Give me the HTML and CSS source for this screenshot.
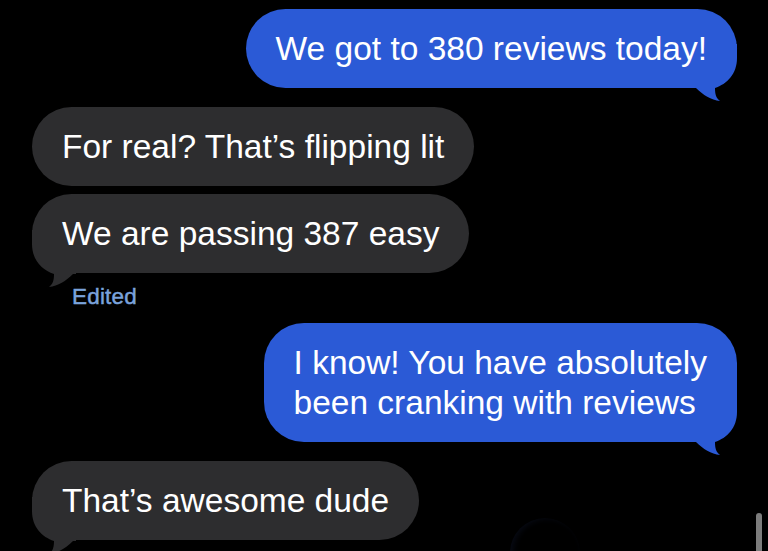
FILE: index.html
```html
<!DOCTYPE html>
<html lang="en">
<head>
<meta charset="utf-8">
<title>Messages</title>
<link rel="stylesheet" href="styles.css">
</head>
<body>
<main class="thread">
  <div class="msg sent first">
    <span class="text">We got to 380 reviews today!</span>
    <svg class="tail tail-sent" viewBox="0 0 44 60" width="44" height="60" aria-hidden="true"><path d="M0,0 H44 V14 C44,30 34,40 22,44 C22,50 23,54 27,57 C18,56 10,51 3,44 H0 Z"/></svg>
  </div>
  <div class="msg recv gap-l">
    <span class="text">For real? That’s flipping lit</span>
  </div>
  <div class="msg recv gap-s">
    <span class="text">We are passing 387 easy</span>
    <svg class="tail tail-recv" viewBox="0 0 44 60" width="44" height="60" aria-hidden="true"><path d="M0,0 H44 V14 C44,30 34,40 22,44 C22,50 23,54 27,57 C18,56 10,51 3,44 H0 Z"/></svg>
  </div>
  <div class="edited">Edited</div>
  <div class="msg sent after-edited">
    <span class="text">I know! You have absolutely<br>been cranking with reviews</span>
    <svg class="tail tail-sent" viewBox="0 0 44 60" width="44" height="60" aria-hidden="true"><path d="M0,0 H44 V14 C44,30 34,40 22,44 C22,50 23,54 27,57 C18,56 10,51 3,44 H0 Z"/></svg>
  </div>
  <div class="msg recv last">
    <span class="text">That’s awesome dude</span>
    <svg class="tail tail-recv" viewBox="0 0 44 60" width="44" height="60" aria-hidden="true"><path d="M0,0 H44 V14 C44,30 34,40 22,44 C22,50 23,54 27,57 C18,56 10,51 3,44 H0 Z"/></svg>
  </div>
  <div class="glow" aria-hidden="true"></div>
  <div class="scrollbar" aria-hidden="true"></div>
</main>
</body>
</html>
```

FILE: styles.css
```css
html, body {
  margin: 0;
  padding: 0;
  background: #000;
  height: 551px;
  overflow: hidden;
}

.thread {
  position: relative;
  height: 551px;
  overflow: hidden;
  box-sizing: border-box;
  padding: 9px 31px 0 32px;
  display: flex;
  flex-direction: column;
  font-family: "Liberation Sans", Arial, sans-serif;
  color: #fff;
}

.msg {
  position: relative;
  flex: none;
  box-sizing: border-box;
  padding: 19.5px 30px;
  border-radius: 40px;
  font-size: 33.5px;
  line-height: 40px;
  white-space: nowrap;
}

.msg .text {
  position: relative;
  z-index: 1;
}

.sent {
  align-self: flex-end;
  background: #2b5ad6;
}

.recv {
  align-self: flex-start;
  background: #2d2d2f;
}

.gap-l { margin-top: 19px; }
.gap-s { margin-top: 8px; }
.after-edited { margin-top: 14px; }
.last { margin-top: 19px; }

.tail {
  position: absolute;
  bottom: -16px;
  display: block;
}

.tail-sent {
  right: 0;
  fill: #2b5ad6;
}

.tail-recv {
  left: 0;
  fill: #2d2d2f;
  transform: scaleX(-1);
  bottom: -17px;
}

.edited {
  flex: none;
  margin-top: 12px;
  margin-left: 40px;
  font-size: 22.5px;
  line-height: 24px;
  font-weight: 400;
  -webkit-text-stroke: 0.45px #7aa3dc;
  color: #7aa3dc;
  letter-spacing: 0.2px;
}

.scrollbar {
  position: absolute;
  right: 6px;
  top: 513px;
  width: 6px;
  height: 48px;
  border-radius: 3px;
  background: #7c7c7c;
}

.glow {
  position: absolute;
  left: 510px;
  top: 518px;
  width: 70px;
  height: 70px;
  border-radius: 50%;
  box-shadow: inset 3px 0 6px rgba(40, 55, 110, 0.18);
}
```
